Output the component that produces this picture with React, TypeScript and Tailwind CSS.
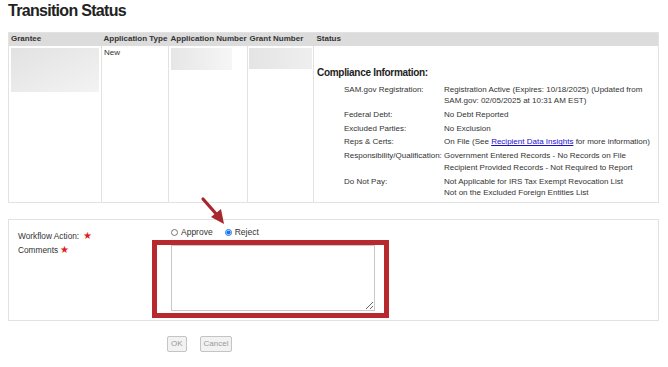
export default function App() {
  const rows: { label: string; values: React.ReactNode[] }[] = [
    {
      label: "SAM.gov Registration:",
      values: [
        "Registration Active (Expires: 10/18/2025) (Updated from SAM.gov: 02/05/2025 at 10:31 AM EST)",
      ],
    },
    { label: "Federal Debt:", values: ["No Debt Reported"] },
    { label: "Excluded Parties:", values: ["No Exclusion"] },
    {
      label: "Reps & Certs:",
      values: [
        <span className="whitespace-nowrap">
          On File (See{" "}
          <a className="text-[#1a0dcc] underline" href="#">
            Recipient Data Insights
          </a>{" "}
          for more information)
        </span>,
      ],
    },
    {
      label: "Responsibility/Qualification:",
      values: [
        "Government Entered Records - No Records on File",
        "Recipient Provided Records - Not Required to Report",
      ],
    },
    {
      label: "Do Not Pay:",
      values: [
        "Not Applicable for IRS Tax Exempt Revocation List",
        "Not on the Excluded Foreign Entities List",
      ],
    },
  ];

  return (
    <div className="relative min-h-[367px] w-[668px] bg-white px-2 font-['Liberation_Sans',Arial,sans-serif] text-[#333]">
      <h1 className="pt-[1px] text-[16px] leading-[20px] font-bold tracking-[-0.7px] text-[#222]">Transition Status</h1>

      <table className="mt-[11px] w-[651px] table-fixed border-collapse border border-[#e2e2e2] text-[8px]">
        <colgroup>
          <col className="w-[93px]" />
          <col className="w-[67px]" />
          <col className="w-[79px]" />
          <col className="w-[66px]" />
          <col />
        </colgroup>
        <thead>
          <tr className="h-[13px] bg-[#dcdcdc] text-left text-[#333]">
            <th className="px-[2px] font-bold">Grantee</th>
            <th className="px-[2px] font-bold whitespace-nowrap">Application Type</th>
            <th className="px-[2px] font-bold whitespace-nowrap">Application Number</th>
            <th className="px-[2px] font-bold whitespace-nowrap">Grant Number</th>
            <th className="px-[3px] font-bold">Status</th>
          </tr>
        </thead>
        <tbody>
          <tr className="h-[157px] align-top">
            <td className="border-r border-[#e2e2e2] px-[2px] pt-[2px]">
              <div className="h-[44px] bg-gradient-to-br from-[#e2e2e2] to-[#f3f3f3]" />
            </td>
            <td className="border-r border-[#e2e2e2] px-[2px] pt-[2px] leading-[10px]">New</td>
            <td className="border-r border-[#e2e2e2] px-[2px] pt-[2px]">
              <div className="h-[22px] w-[61px] bg-gradient-to-r from-[#e6e6e6] to-[#f6f6f6]" />
            </td>
            <td className="border-r border-[#e2e2e2] px-[1px] pt-[2px]">
              <div className="h-[21px] bg-gradient-to-r from-[#e4e4e4] to-[#efefef]" />
            </td>
            <td className="px-[3px] pt-[20px]">
              <div className="text-[10px] leading-[14px] font-bold tracking-[-0.3px] text-[#222]">
                Compliance Information:
              </div>
              <div className="mt-[4px] grid grid-cols-[100px_1fr] gap-y-[2.2px] pl-[27px] text-[8px] leading-[11.6px]">
                {rows.map((r) => (
                  <div key={r.label} className="contents">
                    <div className="whitespace-nowrap">{r.label}</div>
                    <div>
                      {r.values.map((v, i) => (
                        <div key={i}>{v}</div>
                      ))}
                    </div>
                  </div>
                ))}
              </div>
            </td>
          </tr>
        </tbody>
      </table>

      <div className="mt-[16px] flex h-[102px] w-[651px] border border-[#e2e2e2] text-[8.3px]">
        <div className="w-[162px] shrink-0 pt-[10px] pl-[9px]">
          <div className="flex h-[12px] items-center gap-[4px]">
            Workflow Action: <span className="text-[10px] leading-none text-[#e21c1c]">★</span>
          </div>
          <div className="mt-[2px] flex h-[12px] items-center gap-[2px]">
            Comments <span className="text-[10px] leading-none text-[#e21c1c]">★</span>
          </div>
        </div>
        <div className="pt-[6px]">
          <div className="flex h-[12px] items-center">
            <input type="radio" name="wf" className="m-0 h-[7px] w-[7px]" readOnly />
            <span className="ml-[3px] text-[8.5px]">Approve</span>
            <input type="radio" name="wf" className="m-0 ml-[12px] h-[7px] w-[7px] accent-[#1a73e8]" defaultChecked />
            <span className="ml-[3px] text-[8.5px]">Reject</span>
          </div>
          <textarea className="mt-[7px] block h-[66px] w-[204px] resize border border-[#c8c8c8] bg-white" />
        </div>
      </div>

      <div className="mt-[15px] flex gap-[13px] pl-[159px]">
        <button className="h-[16px] rounded-[2px] border border-[#c4c4c4] bg-[#f2f2f2] px-[3px] text-[8px] text-[#999]">
          OK
        </button>
        <button className="h-[16px] rounded-[2px] border border-[#c4c4c4] bg-[#f2f2f2] px-[3px] text-[8px] text-[#999]">
          Cancel
        </button>
      </div>

      {/* annotation: red highlight box + arrow */}
      <div className="pointer-events-none absolute top-[240px] left-[152px] h-[78px] w-[237px] border-[5px] border-[#b8292f]" />
      <svg className="pointer-events-none absolute top-[195px] left-[198px]" width="34" height="34" viewBox="0 0 34 34">
        <line x1="5" y1="4" x2="20" y2="21" stroke="#a8272c" strokeWidth="3.2" strokeLinecap="round" />
        <polygon points="26,29 13,22 23,14" fill="#a8272c" />
      </svg>
    </div>
  );
}
